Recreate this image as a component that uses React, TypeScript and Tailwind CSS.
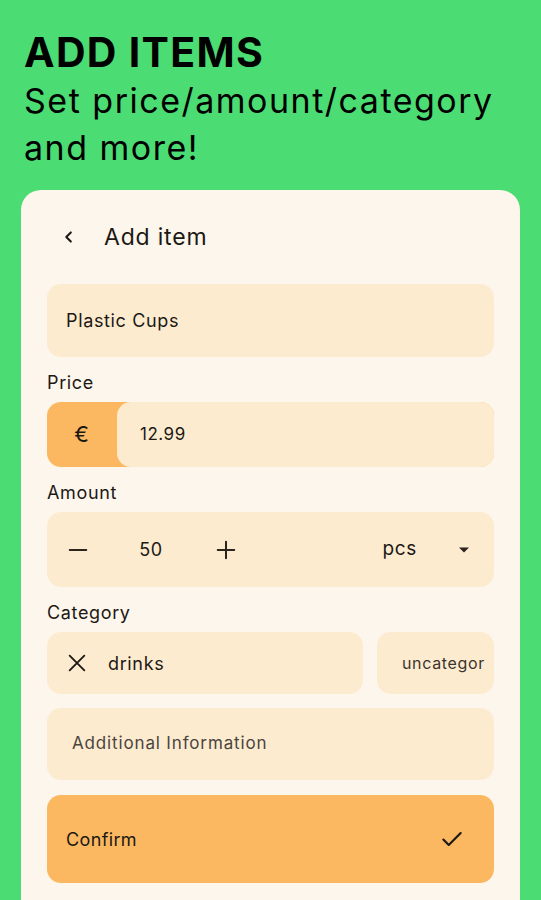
import React from 'react'

const field = "bg-[#fdebd0] rounded-[14px]"

export default function App() {
    return (
        <div className="w-[541px] h-[900px] overflow-hidden bg-[#4bdc73] text-[#1c1814] tracking-[0.04em]" style={{ fontFamily: 'Inter, Roboto, sans-serif' }}>
            <div className="px-6 pt-[30px]">
                <h1 className="text-[41px] leading-[44px] font-bold tracking-[1.3px] text-black">ADD ITEMS</h1>
                <p className="text-[34px] leading-[47px] text-black mt-[3px] tracking-[1.5px]">Set price/amount/category<br />and more!</p>
            </div>
            <div className="mx-[21px] mt-[19px] bg-[#fdf6ec] rounded-[20px] px-[26px] pt-[26px] pb-10">
                <div className="flex items-center h-[42px]">
                    <svg width="22" height="22" viewBox="0 0 24 24" className="ml-[11px]" fill="none" stroke="#1c1814" strokeWidth="2.2" strokeLinecap="round" strokeLinejoin="round">
                        <path d="M14 7l-5 5 5 5" />
                    </svg>
                    <span className="ml-[24px] text-[23px] tracking-[0.035em]">Add item</span>
                </div>
                <div className={`${field} h-[73px] mt-[26px] flex items-center px-[19px] text-[18px]`}>Plastic Cups</div>

                <div className="text-[18px] mt-[14px] h-[24px] leading-[24px]">Price</div>
                <div className="flex h-[65px] mt-[7px] rounded-[14px] bg-[#fbb860]">
                    <div className="w-[70px] flex items-center justify-center text-[22px]">€</div>
                    <div className={`${field} flex-1 flex items-center px-[23px] text-[17px] tracking-[0.03em]`}>12.99</div>
                </div>

                <div className="text-[18px] mt-[14px] h-[24px] leading-[24px]">Amount</div>
                <div className={`${field} h-[75px] mt-[7px] flex items-center px-[20px] text-[18px]`}>
                    <svg width="22" height="22" viewBox="0 0 24 24" fill="none" stroke="#2b241d" strokeWidth="2.2" strokeLinecap="round">
                        <path d="M3 12h18" />
                    </svg>
                    <span className="ml-[48px] w-[28px] text-center">50</span>
                    <svg width="22" height="22" viewBox="0 0 24 24" className="ml-[50px]" fill="none" stroke="#2b241d" strokeWidth="2.2" strokeLinecap="round">
                        <path d="M3 12h18M12 3v18" />
                    </svg>
                    <span className="ml-auto text-[19px]">pcs</span>
                    <svg width="12" height="8" viewBox="0 0 12 8" className="ml-[41px] mr-[4px]">
                        <path d="M1 1.5h10L6 6.5z" fill="#2b241d" />
                    </svg>
                </div>

                <div className="text-[18px] mt-[14px] h-[24px] leading-[24px]">Category</div>
                <div className="flex gap-[14px] mt-[7px] h-[62px]">
                    <div className={`${field} flex-1 flex items-center px-[19px] text-[18px]`}>
                        <svg width="22" height="22" viewBox="0 0 24 24" fill="none" stroke="#1c1814" strokeWidth="2" strokeLinecap="round">
                            <path d="M4 4l16 16M20 4L4 20" />
                        </svg>
                        <span className="ml-[20px]">drinks</span>
                    </div>
                    <div className={`${field} w-[117px] flex items-center pl-[25px] overflow-hidden whitespace-nowrap text-[16px] text-[#3b342d]`}>uncategor</div>
                </div>

                <div className={`${field} h-[72px] mt-[14px] flex items-center px-[25px] text-[17px] text-[#4a443e] tracking-[0.05em]`}>Additional Information</div>

                <div className="h-[88px] mt-[15px] rounded-[14px] bg-[#fbb860] flex items-center px-[19px] text-[18px] tracking-[0.02em]">
                    <span>Confirm</span>
                    <svg width="26" height="26" viewBox="0 0 24 24" className="ml-auto mr-[10px]" fill="none" stroke="#1c1814" strokeWidth="2" strokeLinecap="round" strokeLinejoin="round">
                        <path d="M4 12.5l5 5L20 6.5" />
                    </svg>
                </div>
            </div>
        </div>
    )
}
